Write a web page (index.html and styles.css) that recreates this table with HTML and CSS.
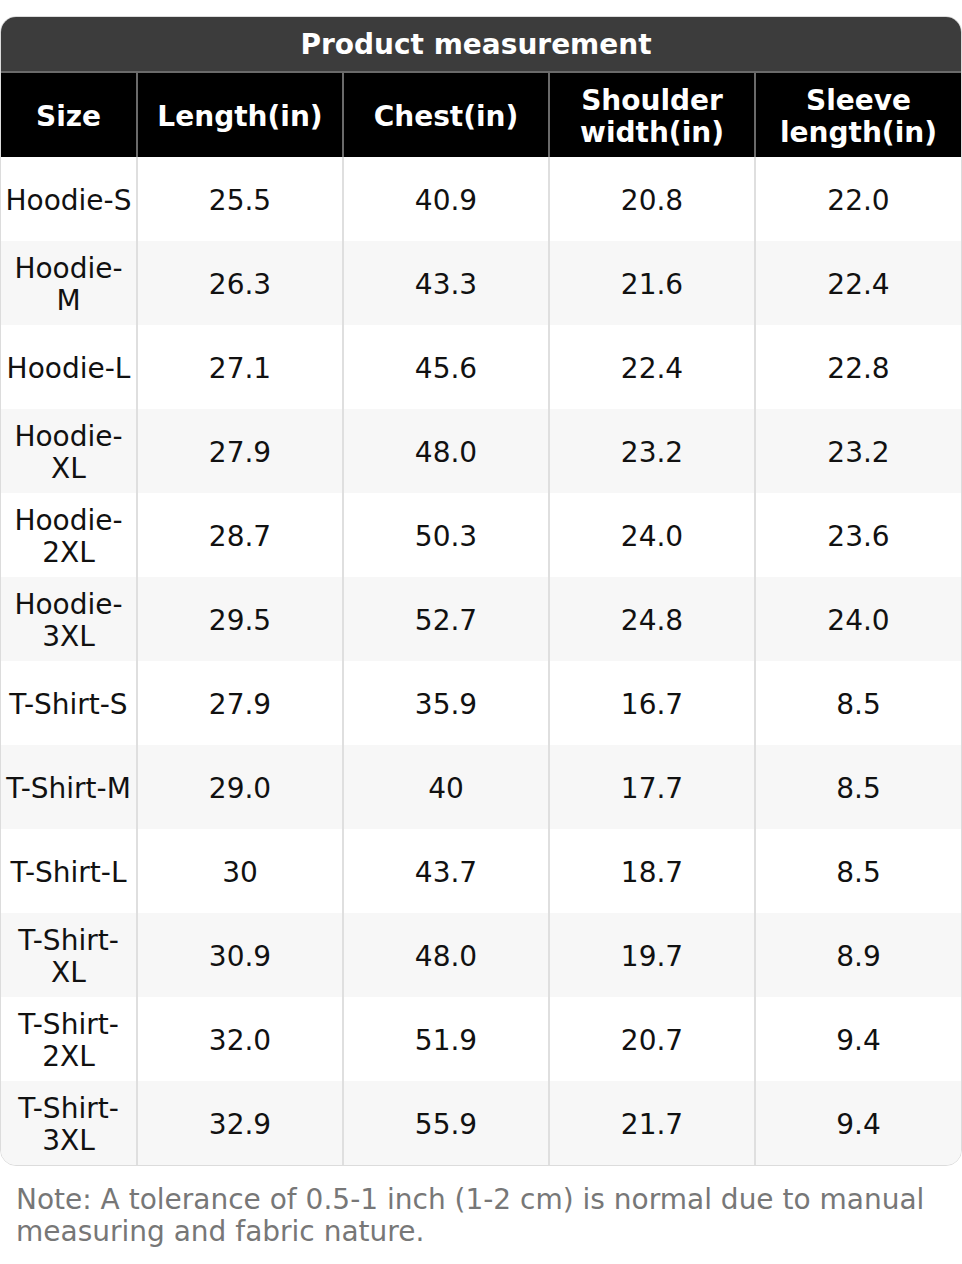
FILE: index.html
```html
<!DOCTYPE html>
<html>
<head>
<meta charset="utf-8">
<link rel="stylesheet" href="styles.css">
</head>
<body>
<div class="card">
  <div class="title">Product measurement</div>
  <table class="size-table">
    <colgroup>
      <col class="c-size"><col class="c-val"><col class="c-val"><col class="c-val"><col class="c-last">
    </colgroup>
    <thead>
      <tr><th>Size</th><th>Length(in)</th><th>Chest(in)</th><th>Shoulder width(in)</th><th>Sleeve length(in)</th></tr>
    </thead>
    <tbody>
      <tr><td>Hoodie-S</td><td>25.5</td><td>40.9</td><td>20.8</td><td>22.0</td></tr>
      <tr><td>Hoodie-M</td><td>26.3</td><td>43.3</td><td>21.6</td><td>22.4</td></tr>
      <tr><td>Hoodie-L</td><td>27.1</td><td>45.6</td><td>22.4</td><td>22.8</td></tr>
      <tr><td>Hoodie-XL</td><td>27.9</td><td>48.0</td><td>23.2</td><td>23.2</td></tr>
      <tr><td>Hoodie-2XL</td><td>28.7</td><td>50.3</td><td>24.0</td><td>23.6</td></tr>
      <tr><td>Hoodie-3XL</td><td>29.5</td><td>52.7</td><td>24.8</td><td>24.0</td></tr>
      <tr><td>T-Shirt-S</td><td>27.9</td><td>35.9</td><td>16.7</td><td>8.5</td></tr>
      <tr><td>T-Shirt-M</td><td>29.0</td><td>40</td><td>17.7</td><td>8.5</td></tr>
      <tr><td>T-Shirt-L</td><td>30</td><td>43.7</td><td>18.7</td><td>8.5</td></tr>
      <tr><td>T-Shirt-XL</td><td>30.9</td><td>48.0</td><td>19.7</td><td>8.9</td></tr>
      <tr><td>T-Shirt-2XL</td><td>32.0</td><td>51.9</td><td>20.7</td><td>9.4</td></tr>
      <tr><td>T-Shirt-3XL</td><td>32.9</td><td>55.9</td><td>21.7</td><td>9.4</td></tr>
    </tbody>
  </table>
</div>
<p class="note">Note: A tolerance of 0.5-1 inch (1-2 cm) is normal due to manual measuring and fabric nature.</p>
</body>
</html>
```
FILE: styles.css
```css
html, body {
  margin: 0;
  padding: 0;
  background: #ffffff;
}
body {
  padding-top: 16px;
  font-family: "DejaVu Sans", "Liberation Sans", sans-serif;
  font-size: 28px;
  line-height: 32px;
  color: #111;
}
.card {
  width: 962px;
  box-sizing: border-box;
  border: 1px solid #dcdcdc;
  border-radius: 16px;
  overflow: hidden;
}
.title {
  background: #3c3c3c;
  color: #fff;
  font-weight: bold;
  text-align: center;
  padding: 12px 10px 10px 0;
  border-bottom: 2px solid #6a6a6a;
}
.size-table {
  width: 960px;
  table-layout: fixed;
  border-collapse: separate;
  border-spacing: 0;
}
.c-size { width: 137px; }
.c-val { width: 206px; }
.c-last { width: 205px; }
.size-table th,
.size-table td {
  padding: 4px 2px 0;
  text-align: center;
  vertical-align: middle;
  border-right: 2px solid #dfdfdf;
}
.size-table th:last-child,
.size-table td:last-child {
  border-right: none;
}
.size-table th {
  background: #000;
  color: #fff;
  font-weight: bold;
  height: 80px;
  border-right-color: #6a6a6a;
}
.size-table td {
  height: 80px;
  color: #111;
}
.size-table tbody tr:nth-child(odd) td { background: #ffffff; }
.size-table tbody tr:nth-child(even) td { background: #f7f7f7; }
.note {
  margin: 18px 0 0;
  padding: 0 16px;
  color: #777777;
}
```
